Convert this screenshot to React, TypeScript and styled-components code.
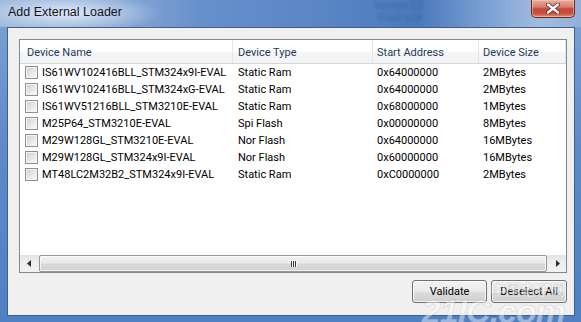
import styled, { createGlobalStyle } from 'styled-components';

interface Device {
  name: string;
  type: string;
  address: string;
  size: string;
}

const devices: Device[] = [
  { name: 'IS61WV102416BLL_STM324x9I-EVAL', type: 'Static Ram', address: '0x64000000', size: '2MBytes' },
  { name: 'IS61WV102416BLL_STM324xG-EVAL', type: 'Static Ram', address: '0x64000000', size: '2MBytes' },
  { name: 'IS61WV51216BLL_STM3210E-EVAL', type: 'Static Ram', address: '0x68000000', size: '1MBytes' },
  { name: 'M25P64_STM3210E-EVAL', type: 'Spi Flash', address: '0x00000000', size: '8MBytes' },
  { name: 'M29W128GL_STM3210E-EVAL', type: 'Nor Flash', address: '0x64000000', size: '16MBytes' },
  { name: 'M29W128GL_STM324x9I-EVAL', type: 'Nor Flash', address: '0x60000000', size: '16MBytes' },
  { name: 'MT48LC2M32B2_STM324x9I-EVAL', type: 'Static Ram', address: '0xC0000000', size: '2MBytes' }
];

const columns = '213px 140px 106px 1fr';

const GlobalStyle = createGlobalStyle`
  html, body {
    margin: 0;
    padding: 0;
  }
  body {
    width: 581px;
    height: 322px;
    overflow: hidden;
    font-family: Roboto, "Liberation Sans", sans-serif;
  }
`;

// Window frame
const Window = styled.div`
  position: relative;
  width: 581px;
  height: 322px;
  display: flex;
  flex-direction: column;
  overflow: hidden;
  background: linear-gradient(180deg, #7fa3d6 0%, #5e8ac8 45%, #4f80c4 100%);
`;

const TitleBar = styled.div`
  position: relative;
  height: 27px;
  flex-shrink: 0;
  display: flex;
  align-items: flex-start;
  justify-content: space-between;
  background:
    radial-gradient(ellipse 95px 20px at 66px 13px, rgba(228, 237, 248, 0.95), rgba(228, 237, 248, 0) 100%),
    linear-gradient(90deg, #9ab6dc 0%, #86a7d6 20%, #6690cb 35%, #5a86c5 55%, #4a79bb 72%, #80a4d6 85%, #a3bce0 93%, #92afd9 100%);
`;

const Title = styled.div`
  margin: 5px 0 0 8px;
  font-family: "Liberation Sans", Roboto, sans-serif;
  font-size: 12.5px;
  color: #15151c;
`;

const GlassText = styled.div<{ $top: number; $left: number }>`
  position: absolute;
  top: ${p => p.$top}px;
  left: ${p => p.$left}px;
  font-size: 10px;
  color: rgba(25, 45, 85, 0.22);
  filter: blur(0.9px);
`;

const CloseButton = styled.div`
  width: 44px;
  height: 18px;
  margin-right: 6px;
  box-sizing: border-box;
  display: flex;
  align-items: center;
  justify-content: center;
  border: 1px solid #6d2a22;
  border-top: none;
  border-radius: 0 0 5px 5px;
  background: linear-gradient(180deg, #e9ab9c 0%, #d8806f 40%, #c5483a 52%, #c84d3d 78%, #e0936f 100%);
  box-shadow: inset 0 0 0 1px rgba(255, 220, 210, 0.45);
`;

const Client = styled.div`
  flex: 1;
  margin: 0 6px 6px 7px;
  border: 1px solid #3f5f8c;
  background: #f0f0f0;
  padding: 11px 7px 12px 11px;
  display: flex;
  flex-direction: column;
  gap: 7px;
  min-height: 0;
`;

// List view
const ListView = styled.div`
  flex: 1;
  border: 1px solid #828790;
  background: #ffffff;
  display: flex;
  flex-direction: column;
  min-height: 0;
`;

const HeaderRow = styled.div`
  height: 23px;
  display: grid;
  grid-template-columns: ${columns};
  border-bottom: 1px solid #d5d5d5;
  background: linear-gradient(180deg, #ffffff 0%, #ffffff 50%, #f4f5f7 51%, #f3f4f6 100%);
`;

const HeaderCell = styled.div<{ $pad: number }>`
  display: flex;
  align-items: center;
  padding: 2px 0 0 ${p => p.$pad}px;
  border-right: 1px solid #e3e5e9;
  font-size: 11px;
  color: #1e395b;
  white-space: nowrap;
`;

const Rows = styled.div`
  flex: 1;
`;

const Row = styled.div`
  height: 17px;
  display: grid;
  grid-template-columns: ${columns};
`;

const Cell = styled.div<{ $pad: number }>`
  display: flex;
  align-items: center;
  gap: 4px;
  padding-left: ${p => p.$pad}px;
  font-size: 11px;
  color: #000000;
  white-space: nowrap;
  overflow: hidden;
`;

const CheckBox = styled.span`
  width: 13px;
  height: 13px;
  box-sizing: border-box;
  flex-shrink: 0;
  border: 1px solid #8f8f8f;
  padding: 1px;
  background: #f4f4f4;

  &::after {
    content: '';
    display: block;
    width: 100%;
    height: 100%;
    background: linear-gradient(135deg, #d2d2d2 0%, #e6e6e6 50%, #f8f8f8 100%);
  }
`;

// Horizontal scrollbar
const ScrollBar = styled.div`
  height: 17px;
  display: flex;
  background: linear-gradient(180deg, #e3e3e3 0%, #ececec 30%, #f2f2f2 100%);
`;

const ScrollArrow = styled.div`
  width: 17px;
  display: flex;
  align-items: center;
  justify-content: center;
`;

const Track = styled.div`
  flex: 1;
  display: flex;
  padding: 0 2px;
`;

const Thumb = styled.div`
  flex: 1;
  box-sizing: border-box;
  border: 1px solid #979797;
  border-radius: 2px;
  display: flex;
  align-items: center;
  justify-content: center;
  background: linear-gradient(180deg, #f3f3f3 0%, #e9e9e9 45%, #d9d9d9 55%, #d3d3d3 100%);
  box-shadow: inset 0 0 0 1px rgba(255, 255, 255, 0.7);
`;

const Grip = styled.div`
  display: flex;
  gap: 1px;

  & > span {
    width: 1px;
    height: 6px;
    background: #3d3d3d;
    box-shadow: 1px 0 0 #f6f6f6;
  }
`;

// Buttons
const ButtonRow = styled.div`
  display: flex;
  justify-content: flex-end;
  gap: 4px;
`;

const Button = styled.div<{ $width: number }>`
  width: ${p => p.$width}px;
  height: 23px;
  box-sizing: border-box;
  display: flex;
  align-items: center;
  justify-content: center;
  border: 1px solid #707070;
  border-radius: 3px;
  font-size: 11px;
  color: #000000;
  background: linear-gradient(180deg, #f2f2f2 0%, #ebebeb 48%, #dddddd 52%, #cfcfcf 100%);
  box-shadow: inset 0 0 0 1px rgba(255, 255, 255, 0.75);
`;

// Site watermark stamped over the bottom right corner
const Watermark = styled.div`
  position: absolute;
  right: 16px;
  bottom: -9px;
  display: flex;
  flex-direction: column;
  align-items: flex-end;
  pointer-events: none;
  color: rgba(255, 255, 255, 0.45);
  -webkit-text-stroke: 0.5px rgba(130, 130, 130, 0.35);
  font-family: "Liberation Sans", "Noto Sans CJK SC", sans-serif;
  font-weight: bold;
  font-style: italic;
`;

const WatermarkCjk = styled.span`
  font-size: 16px;
  font-style: normal;
  letter-spacing: -1px;
  margin-bottom: -9px;
`;

const WatermarkLatin = styled.span`
  font-size: 34px;
  letter-spacing: -1px;
`;

const Arrow = ({ dir }: { dir: 'left' | 'right' }) => (
  <svg width='4' height='7' viewBox='0 0 4 7'>
    <path d={dir === 'left' ? 'M4 0 L0 3.5 L4 7 Z' : 'M0 0 L4 3.5 L0 7 Z'} fill='#2c2c2c' />
  </svg>
);

const CloseIcon = () => (
  <svg width='14' height='11' viewBox='0 0 14 11'>
    <path d='M2 1.5 L12 9.5 M12 1.5 L2 9.5' stroke='#5a2a25' strokeWidth='4' strokeLinecap='round' />
    <path d='M2 1.5 L12 9.5 M12 1.5 L2 9.5' stroke='#ffffff' strokeWidth='2.4' strokeLinecap='round' />
  </svg>
);

export default function App() {
  return (
    <>
      <GlobalStyle />
      <Window>
        <TitleBar>
          <Title>Add External Loader</Title>
          <GlassText $top={0} $left={374}>Version 2.2</GlassText>
          <GlassText $top={12} $left={378}>Flash size</GlassText>
          <CloseButton>
            <CloseIcon />
          </CloseButton>
        </TitleBar>
        <Client>
          <ListView>
            <HeaderRow>
              <HeaderCell $pad={7}>Device Name</HeaderCell>
              <HeaderCell $pad={5}>Device Type</HeaderCell>
              <HeaderCell $pad={4}>Start Address</HeaderCell>
              <HeaderCell $pad={4}>Device Size</HeaderCell>
            </HeaderRow>
            <Rows>
              {devices.map(d => (
                <Row key={d.name}>
                  <Cell $pad={5}>
                    <CheckBox />
                    {d.name}
                  </Cell>
                  <Cell $pad={5}>{d.type}</Cell>
                  <Cell $pad={4}>{d.address}</Cell>
                  <Cell $pad={4}>{d.size}</Cell>
                </Row>
              ))}
            </Rows>
            <ScrollBar>
              <ScrollArrow>
                <Arrow dir='left' />
              </ScrollArrow>
              <Track>
                <Thumb>
                  <Grip>
                    <span />
                    <span />
                    <span />
                  </Grip>
                </Thumb>
              </Track>
              <ScrollArrow>
                <Arrow dir='right' />
              </ScrollArrow>
            </ScrollBar>
          </ListView>
          <ButtonRow>
            <Button $width={75}>Validate</Button>
            <Button $width={76}>Deselect All</Button>
          </ButtonRow>
        </Client>
        <Watermark>
          <WatermarkCjk>中国电子网</WatermarkCjk>
          <WatermarkLatin>21IC.com</WatermarkLatin>
        </Watermark>
      </Window>
    </>
  );
}
